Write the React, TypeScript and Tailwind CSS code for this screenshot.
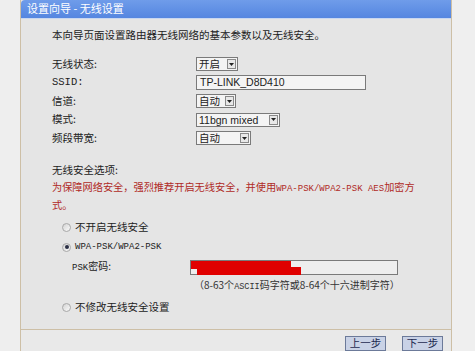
import React from 'react';

const CJK = "font-['SimSun','Noto_Sans_CJK_SC',sans-serif]";
const MONO = "font-['Liberation_Mono','Noto_Sans_CJK_SC',monospace]";

const Arrow = () => (
  <span className="mr-[1px] flex h-[10px] w-[9px] shrink-0 items-center justify-center border border-[#8a8a8a] bg-[#e8e8e8]">
    <svg width="5" height="3" viewBox="0 0 5 3">
      <path d="M0 0h5L2.5 3z" fill="#222" />
    </svg>
  </span>
);

const Select = ({ value, width }: { value: string; width: string }) => (
  <div className={`flex h-[14px] items-center border border-[#7a7a7a] bg-[#f4f4f4] ${width}`}>
    <span className={`flex-1 whitespace-nowrap pl-[2px] text-[10.5px] leading-[12px] text-[#222] ${CJK}`}>{value}</span>
    <Arrow />
  </div>
);

const Radio = ({ checked }: { checked?: boolean }) => (
  <span className="flex h-[9px] w-[9px] items-center justify-center rounded-full border border-[#a8a8a8] bg-gradient-to-br from-[#d4d4d4] to-[#fafafa]">
    {checked && <span className="h-[4px] w-[4px] rounded-full bg-[#2a2f45]" />}
  </span>
);

const Row = ({ label, mono, children }: { label: string; mono?: boolean; children: React.ReactNode }) => (
  <div className="flex h-[18.5px] items-center">
    <span className={`w-[144px] text-[10.5px] leading-none text-[#222] ${mono ? MONO : CJK}`}>{label}</span>
    {children}
  </div>
);

export default function App() {
  return (
    <div className={`flex h-[351px] w-[475px] overflow-hidden bg-[#ededed] ${CJK}`}>
      <div className="w-[20px] shrink-0 bg-[#eeeeee]" />

      <div className="flex w-[432px] shrink-0 flex-col border-l border-r border-[#cdbfa6] bg-[#e5e5e5]">
        <div className="flex h-[19px] items-center rounded-tl-[4px] border-b border-[#c9d7f0] bg-gradient-to-b from-[#6f9cea] to-[#5586e0] pl-[6px]">
          <span className="text-[11px] leading-none text-white">设置向导 - 无线设置</span>
        </div>

        <div className="flex h-[312px] flex-col border-b border-[#cdbfa6] pl-[31px]">
          <p className="mt-[9px] text-[10.5px] leading-[14px] text-[#222]">本向导页面设置路由器无线网络的基本参数以及无线安全。</p>

          <div className="mt-[13px] flex flex-col">
            <Row label="无线状态:">
              <Select value="开启" width="w-[42px]" />
            </Row>
            <Row label="SSID:" mono>
              <div className="flex h-[15px] w-[170px] items-center border border-[#7a7a7a] bg-[#f4f4f4] pl-[3px] font-['Liberation_Sans',sans-serif] text-[10.5px] leading-none text-[#222]">
                TP-LINK_D8D410
              </div>
            </Row>
            <Row label="信道:">
              <Select value="自动" width="w-[40px]" />
            </Row>
            <Row label="模式:">
              <div className="flex h-[14px] w-[84px] items-center border border-[#7a7a7a] bg-[#f4f4f4]">
                <span className="flex-1 whitespace-nowrap pl-[2px] font-['Liberation_Sans',sans-serif] text-[10.5px] leading-[12px] text-[#222]">11bgn mixed</span>
                <Arrow />
              </div>
            </Row>
            <Row label="频段带宽:">
              <Select value="自动" width="w-[55px]" />
            </Row>
          </div>

          <p className="mt-[16px] text-[10.5px] leading-[14px] text-[#222]">无线安全选项:</p>
          <p className="mt-[2px] w-[370px] text-[10.2px] leading-[16px] text-[#b02a26]">
            为保障网络安全，强烈推荐开启无线安全，并使用<span className={`${MONO} text-[9px] leading-[16px]`}>WPA-PSK/WPA2-PSK AES</span>加密方式。
          </p>

          <div className="mt-[4px] flex h-[20px] items-center pl-[10px]">
            <Radio />
            <span className="ml-[4px] text-[10.5px] leading-none text-[#222]">不开启无线安全</span>
          </div>
          <div className="flex h-[20px] items-center pl-[10px]">
            <Radio checked />
            <span className={`ml-[4px] text-[9px] leading-none text-[#222] ${MONO}`}>WPA-PSK/WPA2-PSK</span>
          </div>
          <div className="flex h-[20px] items-center pl-[20px]">
            <span className="w-[118px] text-[10px] leading-none text-[#222]">
              <span className={`${MONO} text-[9px]`}>PSK</span>密码:
            </span>
            <div className="relative h-[15px] w-[208px] border border-[#7a7a7a] bg-[#eeeeee]">
              <span className="absolute left-0 top-0 h-[8px] w-[100px] bg-[#e00000]" />
              <span className="absolute left-[6px] top-[6px] h-[8px] w-[104px] bg-[#e00000]" />
            </div>
          </div>
          <p className="mt-[1px] h-[14px] pl-[142px] text-[10px] leading-[14px] text-[#333]">
            （8-63个<span className={`${MONO} text-[8.5px]`}>ASCII</span>码字符或8-64个十六进制字符）
          </p>
          <div className="mt-[5px] flex h-[20px] items-center pl-[10px]">
            <Radio />
            <span className="ml-[4px] text-[10.5px] leading-none text-[#222]">不修改无线安全设置</span>
          </div>
        </div>

        <div className="flex flex-1 items-start justify-end gap-[16px] bg-[#e9e9e9] pr-[8px] pt-[6px]">
          <button className="flex h-[15px] w-[41px] items-center justify-center border border-[#6c7a99] bg-[#c9d2e6] text-[10.5px] leading-none text-[#1e2a50]">上一步</button>
          <button className="flex h-[15px] w-[41px] items-center justify-center border border-[#6c7a99] bg-[#c9d2e6] text-[10.5px] leading-none text-[#1e2a50]">下一步</button>
        </div>
      </div>

      <div className="flex-1 bg-[#efefef]" />
    </div>
  );
}
